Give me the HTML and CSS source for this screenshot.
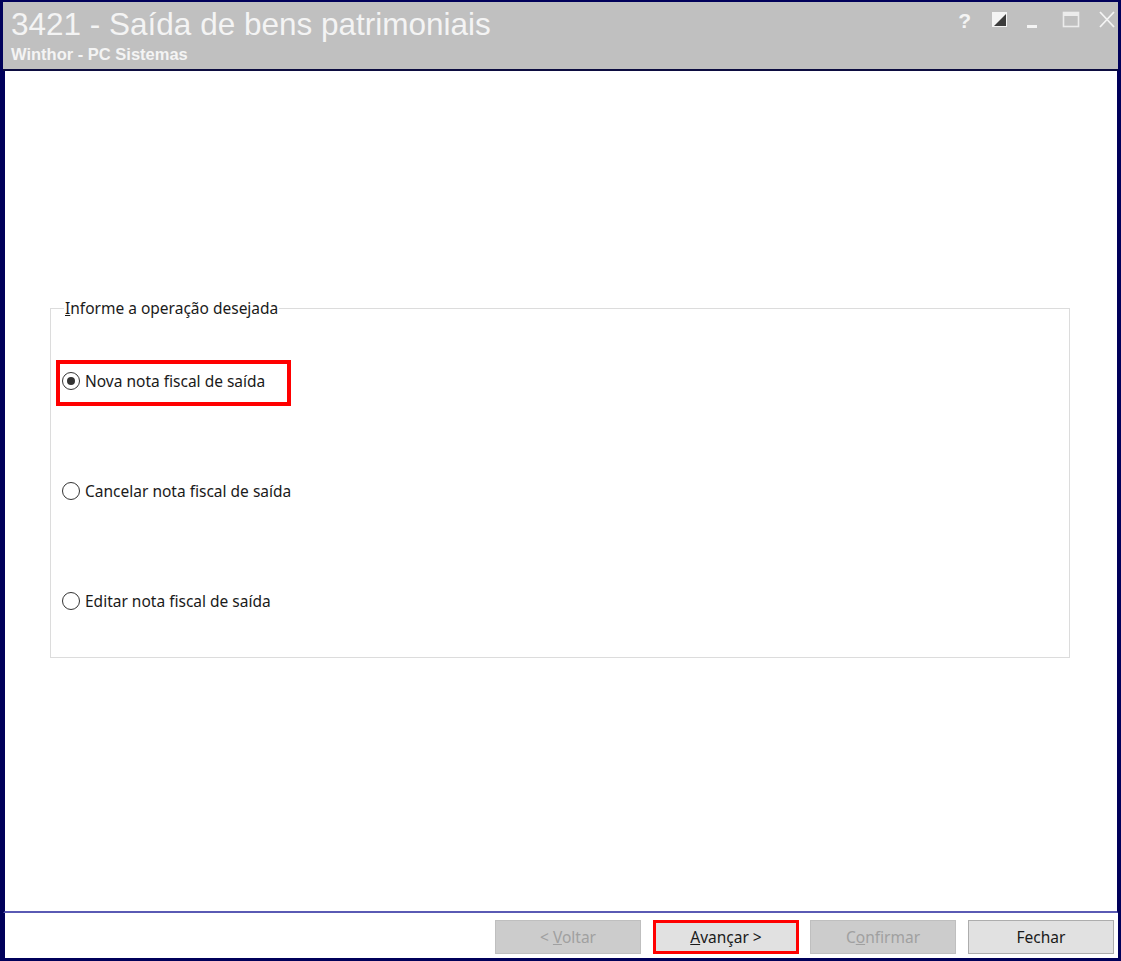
FILE: index.html
```html
<!DOCTYPE html>
<html lang="pt-BR">
<head>
<meta charset="utf-8">
<title>3421 - Saída de bens patrimoniais</title>
<link rel="stylesheet" href="styles.css">
</head>
<body>
<div class="window">
  <header class="titlebar">
    <div class="titles">
      <div class="title">3421 - Saída de bens patrimoniais</div>
      <div class="subtitle">Winthor - PC Sistemas</div>
    </div>
    <div class="controls">
      <span class="ctl help">?</span>
      <svg class="ctl" width="17" height="17" viewBox="0 0 17 17">
        <rect x="1" y="1" width="15" height="15" fill="#f4f4f4"/>
        <polygon points="15,3 15,15 3,15" fill="#3c3c3c"/>
      </svg>
      <svg class="ctl min" width="12" height="17" viewBox="0 0 12 17">
        <rect x="1" y="14" width="10" height="3" fill="#f4f4f4"/>
      </svg>
      <svg class="ctl" width="18" height="17" viewBox="0 0 18 17">
        <rect x="1.5" y="1.5" width="15" height="14" fill="none" stroke="#ececec" stroke-width="1.6"/>
        <rect x="1" y="1" width="16" height="4" fill="#ececec"/>
      </svg>
      <svg class="ctl" width="18" height="17" viewBox="0 0 18 17">
        <path d="M2 1 L16 16 M16 1 L2 16" stroke="#f4f4f4" stroke-width="1.8"/>
      </svg>
    </div>
  </header>
  <div class="divider"></div>
  <main class="content">
    <fieldset class="group">
      <legend><u>I</u>nforme a operação desejada</legend>
      <div class="options">
        <label class="option highlighted"><span class="radio checked"></span>Nova nota fiscal de saída</label>
        <label class="option"><span class="radio"></span>Cancelar nota fiscal de saída</label>
        <label class="option"><span class="radio"></span>Editar nota fiscal de saída</label>
      </div>
    </fieldset>
  </main>
  <footer class="footer">
    <button class="btn disabled">&lt; <u>V</u>oltar</button>
    <button class="btn primary"><u>A</u>vançar &gt;</button>
    <button class="btn disabled">C<u>o</u>nfirmar</button>
    <button class="btn">Fechar</button>
  </footer>
</div>
</body>
</html>
```

FILE: styles.css
```css
html, body {
  margin: 0;
  padding: 0;
  background: #00005a;
}
.window {
  width: 1121px;
  height: 961px;
  box-sizing: border-box;
  padding: 2px 3px 3px 3px;
  background: #00005a;
  display: flex;
  flex-direction: column;
  font-family: "Noto Sans", "Open Sans", sans-serif;
}
.titlebar {
  height: 67px;
  background: #c0c0c0;
  display: flex;
  justify-content: space-between;
  align-items: flex-start;
  flex-shrink: 0;
}
.titles {
  padding: 5px 0 0 8px;
  font-family: "Liberation Sans", Arial, sans-serif;
  color: #f4f4f4;
}
.title {
  font-size: 31.5px;
  line-height: 34px;
}
.subtitle {
  font-size: 16.5px;
  font-weight: bold;
  line-height: 18px;
  margin-top: 4px;
}
.controls {
  display: flex;
  align-items: flex-start;
  padding: 9px 2px 0 0;
}
.ctl {
  display: block;
  margin-left: 18px;
}
.help {
  font-family: "Liberation Sans", Arial, sans-serif;
  font-weight: bold;
  font-size: 21px;
  line-height: 20px;
  color: #f4f4f4;
  margin-right: 2px;
}
.controls .min {
  margin-left: 18px;
  margin-right: 6px;
}
.divider {
  height: 2px;
  background: #0c0c40;
  flex-shrink: 0;
}
.content {
  flex: 1;
  background: #ffffff;
  border-left: 2px solid #00005a;
  border-right: 1px solid #00005a;
  border-bottom: 2px solid #5a5ab4;
  overflow: hidden;
}
.group {
  margin: 228px 0 0 45px;
  width: 1020px;
  box-sizing: border-box;
  border: 1px solid #dcdcdc;
  padding: 0 0 46px 11px;
}
.group legend {
  font-size: 15.5px;
  color: #1a1a1a;
  padding: 0 1px;
  margin-left: 2px;
  line-height: 19px;
}
.options {
  display: flex;
  flex-direction: column;
  gap: 90px;
  margin-top: 53px;
}
.option {
  display: flex;
  align-items: center;
  height: 20px;
  font-size: 15.5px;
  color: #1a1a1a;
  align-self: flex-start;
  position: relative;
}
.option.highlighted::after {
  content: "";
  position: absolute;
  left: -5px;
  top: -10px;
  width: 227px;
  height: 38px;
  border: 4px solid #ff0000;
  margin: -1px 0 0 -1px;
}
.radio {
  width: 18px;
  height: 18px;
  box-sizing: border-box;
  border: 1.5px solid #333333;
  border-radius: 50%;
  margin-right: 5px;
  position: relative;
  background: #fff;
  flex-shrink: 0;
}
.radio.checked::after {
  content: "";
  position: absolute;
  left: 3.5px;
  top: 3.5px;
  width: 8px;
  height: 8px;
  border-radius: 50%;
  background: #333333;
}
.footer {
  height: 45px;
  flex-shrink: 0;
  background: #ffffff;
  display: flex;
  justify-content: flex-end;
  align-items: flex-start;
  padding: 7px 4px 0 0;
  box-sizing: border-box;
  border-left: 2px solid #00005a;
  gap: 12px;
}
.btn {
  width: 146px;
  height: 34px;
  box-sizing: border-box;
  background: #e1e1e1;
  border: 1px solid #adadad;
  font-family: "Noto Sans", "Open Sans", sans-serif;
  font-size: 15.5px;
  color: #1a1a1a;
  padding: 0;
}
.btn.disabled {
  background: #cccccc;
  border-color: #bfbfbf;
  color: #a0a0a0;
}
.btn.primary {
  border: 3px solid #ff0000;
  margin-right: -1px;
}
```
